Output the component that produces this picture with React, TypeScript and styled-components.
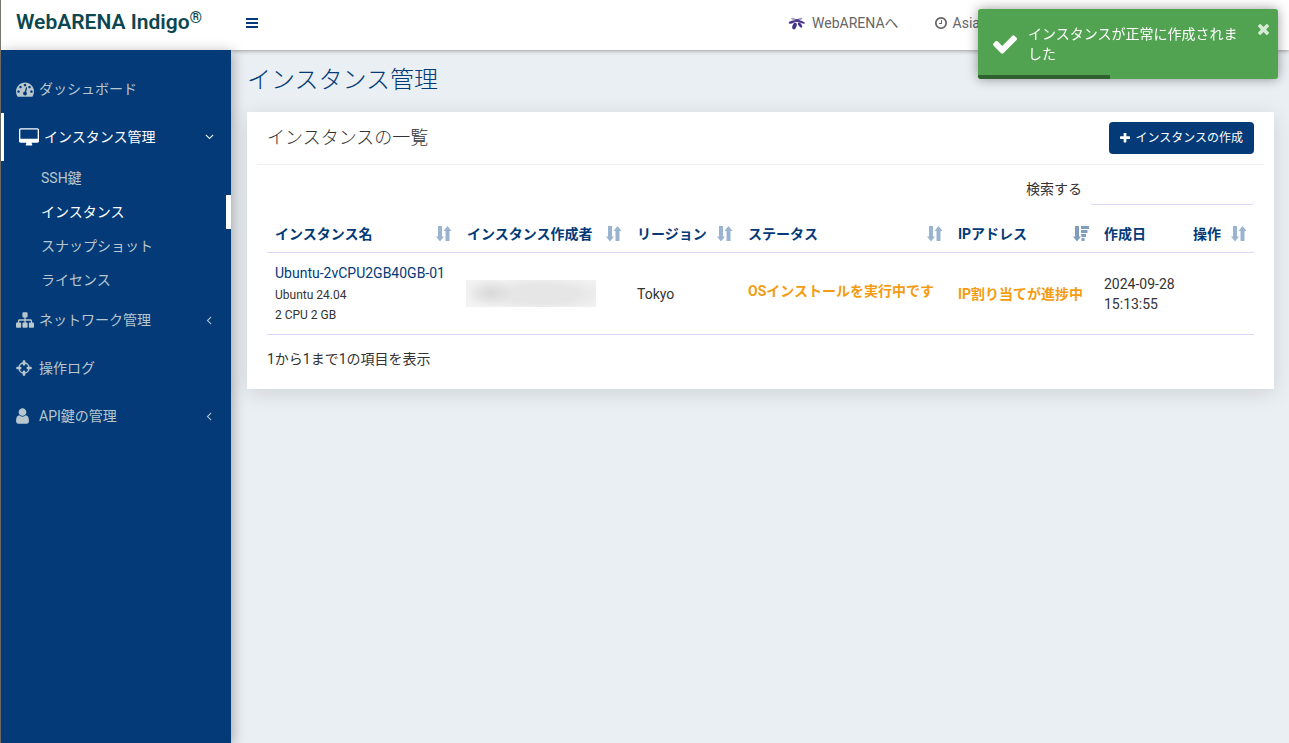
import React from 'react';
import styled, { createGlobalStyle } from 'styled-components';

const navy = '#033a77';
const sans = 'Roboto, "Noto Sans CJK JP", sans-serif';

const GlobalStyle = createGlobalStyle`
  *, *::before, *::after { box-sizing: border-box; }
  body {
    margin: 0;
    background: #eaeff3;
    color: #333;
    font: 14px/20px ${sans};
  }
  a { color: inherit; text-decoration: none; }
  ul { list-style: none; margin: 0; padding: 0; }
  button, input { font: inherit; }
`;

const glyphs = {
  dashboard: 'M384 1152q0-53-37.5-90.5t-90.5-37.5-90.5 37.5-37.5 90.5 37.5 90.5 90.5 37.5 90.5-37.5 37.5-90.5zm192-448q0-53-37.5-90.5t-90.5-37.5-90.5 37.5-37.5 90.5 37.5 90.5 90.5 37.5 90.5-37.5 37.5-90.5zm428 481l101-382q6-26-7.5-48.5t-38.5-29.5-48 6.5-30 39.5l-101 382q-60 5-107 43.5t-63 98.5q-20 77 20 146t117 89 146-20 89-117q16-60-6-117t-72-91zm660-33q0-53-37.5-90.5t-90.5-37.5-90.5 37.5-37.5 90.5 37.5 90.5 90.5 37.5 90.5-37.5 37.5-90.5zm-640-640q0-53-37.5-90.5t-90.5-37.5-90.5 37.5-37.5 90.5 37.5 90.5 90.5 37.5 90.5-37.5 37.5-90.5zm448 192q0-53-37.5-90.5t-90.5-37.5-90.5 37.5-37.5 90.5 37.5 90.5 90.5 37.5 90.5-37.5 37.5-90.5zm320 448q0 261-141 483-19 29-54 29h-1402q-35 0-54-29-141-221-141-483 0-182 71-348t191-286 286-191 348-71 348 71 286 191 191 286 71 348z',
  desktop: 'M1728 992v-832q0-13-9.500-22.500t-22.500-9.500h-1600q-13 0-22.500 9.500t-9.500 22.500v832q0 13 9.500 22.500t22.500 9.500h1600q13 0 22.500-9.500t9.500-22.500zm128-832v1088q0 66-47 113t-113 47h-544q0 37 16 77.500t32 71 16 43.500q0 26-19 45t-45 19h-512q-26 0-45-19t-19-45q0-14 16-44t32-70 16-78h-544q-66 0-113-47t-47-113v-1088q0-66 47-113t113-47h1600q66 0 113 47t47 113z',
  sitemap: 'M1792 1248v320q0 40-28 68t-68 28h-320q-40 0-68-28t-28-68v-320q0-40 28-68t68-28h96v-192h-512v192h96q40 0 68 28t28 68v320q0 40-28 68t-68 28h-320q-40 0-68-28t-28-68v-320q0-40 28-68t68-28h96v-192h-512v192h96q40 0 68 28t28 68v320q0 40-28 68t-68 28h-320q-40 0-68-28t-28-68v-320q0-40 28-68t68-28h96v-192q0-52 38-90t90-38h512v-192h-96q-40 0-68-28t-28-68v-320q0-40 28-68t68-28h320q40 0 68 28t28 68v320q0 40-28 68t-68 28h-96v192h512q52 0 90 38t38 90v192h96q40 0 68 28t28 68z',
  crosshairs: 'M1325 1024h-109q-26 0-45-19t-19-45v-128q0-26 19-45t45-19h109q-32-108-112.5-188.5t-188.5-112.5v109q0 26-19 45t-45 19h-128q-26 0-45-19t-19-45v-109q-108 32-188.5 112.5t-112.5 188.5h109q26 0 45 19t19 45v128q0 26-19 45t-45 19h-109q32 108 112.5 188.5t188.5 112.5v-109q0-26 19-45t45-19h128q26 0 45 19t19 45v109q108-32 188.5-112.5t112.5-188.5zm339-192v128q0 26-19 45t-45 19h-143q-37 161-154.5 278.5t-278.5 154.5v143q0 26-19 45t-45 19h-128q-26 0-45-19t-19-45v-143q-161-37-278.5-154.5t-154.5-278.5h-143q-26 0-45-19t-19-45v-128q0-26 19-45t45-19h143q37-161 154.5-278.5t278.5-154.5v-143q0-26 19-45t45-19h128q26 0 45 19t19 45v143q161 37 278.5 154.5t154.5 278.5h143q26 0 45 19t19 45z',
  user: 'M1536 1399q0 109-62.5 187t-150.5 78h-854q-88 0-150.5-78t-62.5-187q0-85 8.5-160.5t31.5-152 58.5-131 94-89 134.5-34.5q131 128 313 128t313-128q76 0 134.5 34.5t94 89 58.5 131 31.5 152 8.5 160.5zm-256-887q0 159-112.5 271.5t-271.5 112.5-271.5-112.5-112.5-271.5 112.5-271.5 271.5-112.5 271.5 112.5 112.5 271.5z',
  clock: 'M1024 544v448q0 14-9 23t-23 9h-320q-14 0-23-9t-9-23v-64q0-14 9-23t23-9h224v-352q0-14 9-23t23-9h64q14 0 23 9t9 23zm416 352q0-148-73-273t-198-198-273-73-273 73-198 198-73 273 73 273 198 198 273 73 273-73 198-198 73-273zm224 0q0 209-103 385.5t-279.5 279.5-385.5 103-385.5-103-279.5-279.5-103-385.5 103-385.5 279.5-279.5 385.5-103 385.5 103 279.5 279.5 103 385.5z',
  plus: 'M1600 736v192q0 40-28 68t-68 28h-416v416q0 40-28 68t-68 28h-192q-40 0-68-28t-28-68v-416h-416q-40 0-68-28t-28-68v-192q0-40 28-68t68-28h416v-416q0-40 28-68t68-28h192q40 0 68 28t28 68v416h416q40 0 68 28t28 68z',
  angle: 'M1203 544q0 13-10 23l-393 393 393 393q10 10 10 23t-10 23l-50 50q-10 10-23 10t-23-10l-466-466q-10-10-10-23t10-23l466-466q10-10 23-10t23 10l50 50q10 10 10 23z',
  check: 'M1671 566q0 40-28 68l-724 724-136 136q-28 28-68 28t-68-28l-136-136-362-362q-28-28-28-68t28-68l136-136q28-28 68-28t68 28l294 295 656-657q28-28 68-28t68 28l136 136q28 28 28 68z',
  times: 'M1490 1322q0 40-28 68l-136 136q-28 28-68 28t-68-28l-294-294-294 294q-28 28-68 28t-68-28l-136-136q-28-28-28-68t28-68l294-294-294-294q-28-28-28-68t28-68l136-136q28-28 68-28t68 28l294 294 294-294q28-28 68-28t68 28l136 136q28 28 28 68t-28 68l-294 294 294 294q28 28 28 68z',
};
type GlyphName = keyof typeof glyphs;

const glyphBoxes: Partial<Record<GlyphName, string>> = {
  desktop: '-64 0 1920 1792',
  crosshairs: '128 0 1536 1792',
  user: '256 0 1280 1792',
  clock: '128 128 1536 1536',
  plus: '192 192 1408 1408',
  check: '121 270 1550 1252',
  times: '302 366 1188 1188',
};

const Svg = styled.svg`
  display: block;
  flex: none;
  fill: currentColor;
`;

function Glyph({ name, width, height }: { name: GlyphName; width: number; height: number }) {
  return (
    <Svg width={width} height={height} viewBox={glyphBoxes[name] ?? '0 0 1792 1792'} aria-hidden="true">
      <path d={glyphs[name]} />
    </Svg>
  );
}

function SortIcon({ descending }: { descending?: boolean }) {
  return (
    <Svg width="16" height="16" viewBox="0 0 16 16" aria-hidden="true">
      <path d="M2 0H6V10.500H8L4 15.500 0 10.500H2z" />
      {descending ? (
        <path d="M8 0H16V3H8zM8 4H14.500V7H8zM8 8H13V11H8.500zM8.500 12H11.500V15H8.500z" />
      ) : (
        <path d="M9.500 15V5H7.500L11.500 0 15.500 5H13.500V15z" />
      )}
    </Svg>
  );
}

function ArenaMark() {
  return (
    <Svg width="18" height="14" viewBox="0 0 18 14" aria-hidden="true">
      <g fill="#46348a">
        <ellipse cx="9" cy="4.500" rx="2.500" ry="1.500" />
        <ellipse cx="5.500" cy="3" rx="2.500" ry="1" transform="rotate(15 5.500 3)" opacity=".5" />
        <ellipse cx="12" cy="3" rx="2.500" ry="1" transform="rotate(-15 12 3)" opacity=".5" />
        <ellipse cx="4" cy="6" rx="3.500" ry="1.200" transform="rotate(-18 4 6)" />
        <ellipse cx="13.500" cy="6" rx="3.500" ry="1.200" transform="rotate(22 13.500 6)" />
        <ellipse cx="6.500" cy="10" rx="2" ry="3.500" transform="rotate(20 6.500 10)" />
        <ellipse cx="12" cy="9" rx="1.500" ry="3" transform="rotate(-35 12 9)" />
      </g>
    </Svg>
  );
}

const Shell = styled.div`
  display: grid;
  grid-template-columns: 230px minmax(0, 1fr);
  grid-template-rows: 50px minmax(0, 1fr);
  min-height: 100vh;
  border-left: 1px solid #77776f;
`;

const Brand = styled.a`
  z-index: 2;
  padding: 10px 15px;
  background: #fff;
  color: #0b4751;
  font-size: 21px;
  font-weight: 600;
  line-height: 24px;
  white-space: nowrap;
  sup {
    font-size: 16px;
    line-height: 0;
    vertical-align: 6px;
  }
`;

const TopBar = styled.header`
  z-index: 1;
  display: flex;
  align-items: center;
  padding: 0 266px 4px 12px;
  background: #fff;
  box-shadow: 0 1px 4px rgba(0, 0, 0, 0.35);
  color: #666;
`;

const MenuButton = styled.button`
  display: grid;
  gap: 2px;
  width: 18px;
  margin-right: auto;
  padding: 3px;
  border: 0;
  background: none;
  cursor: pointer;
`;

const MenuLine = styled.span`
  height: 2px;
  background: ${navy};
`;

const TopLink = styled.a`
  display: flex;
  align-items: center;
  gap: 6px;
  margin-left: 36px;
`;

const Sidebar = styled.nav`
  z-index: 2;
  padding-top: 15px;
  background: ${navy};
  box-shadow: 2px 2px 12px rgba(0, 0, 0, 0.3);
  color: #b8c7ce;
`;

const NavLink = styled.a<{ $active?: boolean }>`
  display: flex;
  align-items: center;
  gap: 5px;
  height: 48px;
  padding: 0 15px 0 ${(p) => (p.$active ? '15px' : '12px')};
  border-left: 3px solid ${(p) => (p.$active ? '#fff' : 'transparent')};
  color: ${(p) => (p.$active ? '#fff' : 'inherit')};
`;

const NavIcon = styled.span`
  min-width: 18px;
`;

const Caret = styled.span<{ $open?: boolean }>`
  margin-left: auto;
  transform: ${(p) => (p.$open ? 'rotate(-90deg)' : 'none')};
`;

const SubMenu = styled.ul`
  margin-bottom: -1px;
`;

const SubLink = styled.a<{ $active?: boolean }>`
  display: block;
  padding: 7px 0 7px 40px;
  border-right: 5px solid ${(p) => (p.$active ? '#fff' : 'transparent')};
  color: ${(p) => (p.$active ? '#fff' : 'inherit')};
`;

const Main = styled.main`
  min-width: 0;
  padding: 14px 15px 20px 16px;
`;

const PageTitle = styled.h1`
  margin: 0 0 16px;
  color: ${navy};
  font-size: 24px;
  font-weight: 300;
  line-height: 32px;
`;

const Card = styled.section`
  padding: 0 10px 20px;
  background: #fff;
  box-shadow: 0 4px 20px rgba(0, 0, 0, 0.12);
`;

const CardHeader = styled.div`
  display: flex;
  align-items: center;
  justify-content: space-between;
  padding: 10px;
  border-bottom: 1px solid #f0f0f4;
`;

const CardTitle = styled.h2`
  margin: 0;
  color: #333;
  font-size: 18px;
  font-weight: 300;
  line-height: 32px;
`;

const CreateButton = styled.button`
  display: flex;
  align-items: center;
  gap: 5px;
  height: 32px;
  padding: 0 11px;
  border: 0;
  border-radius: 4px;
  background: ${navy};
  color: #fff;
  font-size: 12px;
  cursor: pointer;
`;

const CardBody = styled.div`
  padding: 8px 10px 0;
`;

const SearchRow = styled.div`
  display: flex;
  justify-content: flex-end;
  align-items: center;
  gap: 8px;
`;

const SearchInput = styled.input`
  width: 164px;
  height: 32px;
  border: 0;
  border-bottom: 1px solid #d9d9f6;
  border-radius: 4px;
  background: none;
`;

const Table = styled.table`
  width: 100%;
  margin: 10px 0 14px;
  border-collapse: collapse;
  table-layout: fixed;
`;

const HeadCell = styled.th`
  padding: 8px 7px 8px 8px;
  border-bottom: 1px solid #d9d9f6;
  color: ${navy};
  text-align: left;
  white-space: nowrap;
`;

const HeadLabel = styled.div`
  display: flex;
  align-items: center;
  justify-content: space-between;
  height: 21px;
`;

const SortMark = styled.span<{ $on: boolean }>`
  color: ${(p) => (p.$on ? '#7f9dbf' : '#9ab3d0')};
`;

const Cell = styled.td`
  height: 82px;
  padding: 9px 8px;
  border-bottom: 1px solid #d9d9f6;
`;

const InstanceLink = styled.a`
  display: block;
  margin-bottom: 2px;
  color: ${navy};
  white-space: nowrap;
`;

const Spec = styled.div`
  font-size: 12px;
`;

const Status = styled.strong<{ $raised?: boolean }>`
  display: block;
  padding-bottom: ${(p) => (p.$raised ? '6px' : '0')};
  color: #f39c12;
  white-space: nowrap;
`;

const Redacted = styled.div`
  height: 27px;
  width: 130px;
  margin-left: -1px;
  background: radial-gradient(ellipse 24px 14px at 24px 13px, #d9d9d9, rgba(217, 217, 217, 0)),
    radial-gradient(ellipse 70px 18px at 76px 14px, #e6e6e6 50%, rgba(230, 230, 230, 0)),
    #f2f2f2;
`;

const Toast = styled.div`
  position: fixed;
  z-index: 3;
  top: 9px;
  right: 11px;
  display: flex;
  width: 300px;
  padding: 15px 9px 15px 15px;
  border-radius: 3px;
  overflow: hidden;
  background: #51a351;
  box-shadow: 0 0 12px rgba(0, 0, 0, 0.4);
  color: #fff;
`;

const ToastIcon = styled.span`
  align-self: center;
  margin-right: 11px;
`;

const ToastText = styled.p`
  flex: 1;
  margin: 0;
`;

const ToastClose = styled.button`
  align-self: flex-start;
  margin-left: 16px;
  padding: 0;
  border: 0;
  background: none;
  color: #d6ebd6;
  cursor: pointer;
`;

const ToastProgress = styled.div`
  position: absolute;
  left: 0;
  bottom: 0;
  width: 44%;
  height: 4px;
  background: #306230;
`;

const columns: { label: string; width: number; sort?: 'both' | 'desc' }[] = [
  { label: 'インスタンス名', width: 192, sort: 'both' },
  { label: 'インスタンス作成者', width: 170, sort: 'both' },
  { label: 'リージョン', width: 111, sort: 'both' },
  { label: 'ステータス', width: 210, sort: 'both' },
  { label: 'IPアドレス', width: 146, sort: 'desc' },
  { label: '作成日', width: 89 },
  { label: '操作', width: 69, sort: 'both' },
];

const subItems = ['SSH鍵', 'インスタンス', 'スナップショット', 'ライセンス'];

export default function App() {
  return (
    <>
      <GlobalStyle />
      <Shell>
        <Brand href="#">WebARENA Indigo<sup>®</sup></Brand>
        <TopBar>
          <MenuButton aria-label="メニュー">
            <MenuLine /><MenuLine /><MenuLine />
          </MenuButton>
          <TopLink href="#"><ArenaMark />WebARENAへ</TopLink>
          <TopLink href="#"><Glyph name="clock" width={12} height={12} />Asia/Tokyo</TopLink>
        </TopBar>
        <Sidebar>
          <ul>
            <li>
              <NavLink href="#">
                <NavIcon><Glyph name="dashboard" width={18} height={18} /></NavIcon>
                ダッシュボード
              </NavLink>
            </li>
            <li>
              <NavLink href="#" $active>
                <NavIcon><Glyph name="desktop" width={20} height={19} /></NavIcon>
                インスタンス管理
                <Caret $open><Glyph name="angle" width={14} height={14} /></Caret>
              </NavLink>
              <SubMenu>
                {subItems.map((item) => (
                  <li key={item}><SubLink href="#" $active={item === 'インスタンス'}>{item}</SubLink></li>
                ))}
              </SubMenu>
            </li>
            <li>
              <NavLink href="#">
                <NavIcon><Glyph name="sitemap" width={18} height={18} /></NavIcon>
                ネットワーク管理
                <Caret><Glyph name="angle" width={14} height={14} /></Caret>
              </NavLink>
            </li>
            <li>
              <NavLink href="#">
                <NavIcon><Glyph name="crosshairs" width={16} height={18} /></NavIcon>
                操作ログ
              </NavLink>
            </li>
            <li>
              <NavLink href="#">
                <NavIcon><Glyph name="user" width={13} height={18} /></NavIcon>
                API鍵の管理
                <Caret><Glyph name="angle" width={14} height={14} /></Caret>
              </NavLink>
            </li>
          </ul>
        </Sidebar>
        <Main>
          <PageTitle>インスタンス管理</PageTitle>
          <Card>
            <CardHeader>
              <CardTitle>インスタンスの一覧</CardTitle>
              <CreateButton><Glyph name="plus" width={10} height={10} />インスタンスの作成</CreateButton>
            </CardHeader>
            <CardBody>
              <SearchRow>
                <label htmlFor="search">検索する</label>
                <SearchInput id="search" type="search" />
              </SearchRow>
              <Table>
                <colgroup>
                  {columns.map((c) => <col key={c.label} width={c.width} />)}
                </colgroup>
                <thead>
                  <tr>
                    {columns.map((c) => (
                      <HeadCell key={c.label} scope="col">
                        <HeadLabel>
                          {c.label}
                          {c.sort && (
                            <SortMark $on={c.sort === 'desc'}>
                              <SortIcon descending={c.sort === 'desc'} />
                            </SortMark>
                          )}
                        </HeadLabel>
                      </HeadCell>
                    ))}
                  </tr>
                </thead>
                <tbody>
                  <tr>
                    <Cell>
                      <InstanceLink href="#">Ubuntu-2vCPU2GB40GB-01</InstanceLink>
                      <Spec>Ubuntu 24.04</Spec>
                      <Spec>2 CPU 2 GB</Spec>
                    </Cell>
                    <Cell><Redacted /></Cell>
                    <Cell>Tokyo</Cell>
                    <Cell><Status $raised>OSインストールを実行中です</Status></Cell>
                    <Cell><Status>IP割り当てが進捗中</Status></Cell>
                    <Cell>2024-09-28 15:13:55</Cell>
                    <Cell />
                  </tr>
                </tbody>
              </Table>
              1から1まで1の項目を表示
            </CardBody>
          </Card>
        </Main>
      </Shell>
      <Toast role="status">
        <ToastIcon><Glyph name="check" width={24} height={20} /></ToastIcon>
        <ToastText>インスタンスが正常に作成されました</ToastText>
        <ToastClose aria-label="閉じる"><Glyph name="times" width={11} height={11} /></ToastClose>
        <ToastProgress />
      </Toast>
    </>
  );
}
